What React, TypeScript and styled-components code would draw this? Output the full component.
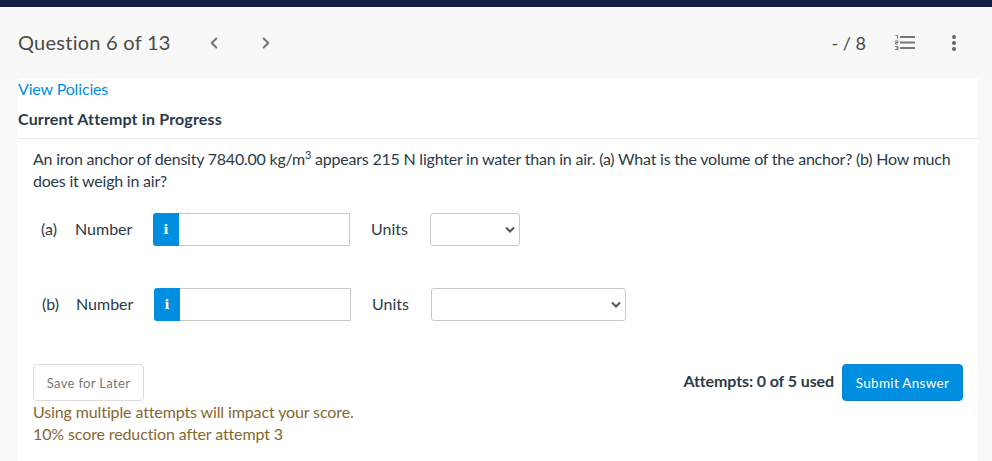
import React from 'react';
import styled, { createGlobalStyle } from 'styled-components';
import { ChevronLeft, ChevronRight } from 'lucide-react';

const GlobalStyle = createGlobalStyle`
  html, body {
    margin: 0;
    padding: 0;
    background: #f9f9f9;
    font-family: Lato, "Liberation Sans", sans-serif;
    color: #2b3a49;
    overflow: hidden;
  }
`;

const selectArrow =
  "data:image/svg+xml,%3Csvg xmlns='http://www.w3.org/2000/svg' width='10' height='7' viewBox='0 0 10 7'%3E%3Cpath d='M1 1.5l4 4 4-4' fill='none' stroke='%23555' stroke-width='2'/%3E%3C/svg%3E";

function ListIcon() {
  return (
    <svg width="20" height="15" viewBox="0 0 20 15">
      <path d="M0.5 0.5h2v3.5" fill="none" stroke="#777" strokeWidth="1" />
      <path d="M0 6h3v1.5H0.5V9H3" fill="none" stroke="#777" strokeWidth="1" />
      <path d="M0 11.5h3v3H0M1 13h2" fill="none" stroke="#777" strokeWidth="1" />
      <path d="M5 2h15M5 7.5h15M5 13h15" fill="none" stroke="#777" strokeWidth="2" />
    </svg>
  );
}

function MoreIcon() {
  return (
    <svg width="4" height="16" viewBox="0 0 4 16">
      <circle cx="2" cy="2" r="2" fill="#666" />
      <circle cx="2" cy="8" r="2" fill="#666" />
      <circle cx="2" cy="14" r="2" fill="#666" />
    </svg>
  );
}

function AnswerRow({ part, unitsWidth, shift }: { part: string; unitsWidth: number; shift: number }) {
  return (
    <Row $shift={shift}>
      <PartLabel>{part}</PartLabel>
      <NumberLabel>Number</NumberLabel>
      <InfoButton>i</InfoButton>
      <NumberInput type="text" />
      <UnitsLabel>Units</UnitsLabel>
      <UnitsSelect $width={unitsWidth}>
        <option></option>
      </UnitsSelect>
    </Row>
  );
}

export default function App() {
  return (
    <Page>
      <GlobalStyle />
      <TopBar />
      <Header>
        <QuestionTitle>Question 6 of 13</QuestionTitle>
        <NavButton><ChevronLeft size={18} strokeWidth={2.8} /></NavButton>
        <NavButton><ChevronRight size={18} strokeWidth={2.8} /></NavButton>
        <Spacer />
        <Score>- / 8</Score>
        <ToolIcon $width={48}><ListIcon /></ToolIcon>
        <ToolIcon $width={50}><MoreIcon /></ToolIcon>
        <HeaderEnd />
      </Header>
      <Card>
        <PolicyLink>View Policies</PolicyLink>
        <AttemptTitle>Current Attempt in Progress</AttemptTitle>
        <Question>
          An iron anchor of density 7840.00 kg/m<sup>3</sup> appears 215 N lighter in water than in air. (a) What is the volume of the anchor? (b) How much does it weigh in air?
        </Question>
        <AnswerRow part="(a)" unitsWidth={90} shift={0} />
        <AnswerRow part="(b)" unitsWidth={195} shift={1} />
        <Footer>
          <div>
            <SaveButton>Save for Later</SaveButton>
            <Notice>Using multiple attempts will impact your score.</Notice>
            <Notice>10% score reduction after attempt 3</Notice>
          </div>
          <FooterRight>
            <AttemptCount>Attempts: 0 of 5 used</AttemptCount>
            <SubmitButton>Submit Answer</SubmitButton>
          </FooterRight>
        </Footer>
      </Card>
    </Page>
  );
}

const Page = styled.div`
  width: 992px;
  height: 461px;
  overflow: hidden;
`;

const TopBar = styled.div`
  height: 7px;
  background: #14204a;
`;

const Header = styled.div`
  height: 71px;
  display: flex;
  align-items: center;
  padding-left: 18px;
  background: #f8f8f8;
`;

const QuestionTitle = styled.div`
  font-size: 20px;
  line-height: 24px;
  margin-top: -2px;
  letter-spacing: 0.25px;
  color: #4a4a4a;
  width: 182px;
`;

const NavButton = styled.div`
  width: 52px;
  margin-left: 5px;
  margin-right: -5px;
  display: flex;
  justify-content: flex-start;
  color: #777;
`;

const Spacer = styled.div`
  flex: 1;
`;

const Score = styled.div`
  font-size: 18px;
  color: #4a4a4a;
  margin-right: 15px;
`;

const ToolIcon = styled.div<{ $width: number }>`
  width: ${(p) => p.$width}px;
  display: flex;
  justify-content: center;
  align-items: center;
`;

const HeaderEnd = styled.div`
  width: 13px;
`;

const Card = styled.div`
  margin: 0 14px 0 18px;
  height: 383px;
  background: #fff;
`;

const PolicyLink = styled.a`
  display: block;
  padding-top: 1px;
  font-size: 16px;
  line-height: 20px;
  letter-spacing: -0.15px;
  color: #008ee0;
`;

const AttemptTitle = styled.div`
  margin-top: 10px;
  padding-bottom: 9px;
  height: 20px;
  font-size: 16px;
  line-height: 20px;
  font-weight: 700;
  letter-spacing: 0.16px;
  border-bottom: 1px solid #e8e8e8;
`;

const Question = styled.div`
  margin: 9px 14px 0 15px;
  font-size: 16px;
  line-height: 22px;
  letter-spacing: -0.22px;
  height: 44px;
  sup {
    font-size: 11px;
    line-height: 0;
  }
`;

const Row = styled.div<{ $shift: number }>`
  display: flex;
  align-items: center;
  height: 33px;
  margin-top: ${(p) => (p.$shift ? 42 : 21)}px;
  padding-left: ${(p) => 23 + p.$shift}px;
  font-size: 16px;
`;

const PartLabel = styled.span`
  width: 34px;
  margin-top: -2px;
`;

const NumberLabel = styled.span`
  width: 78px;
  margin-top: -2px;
`;

const InfoButton = styled.div`
  width: 26px;
  height: 33px;
  box-sizing: border-box;
  display: flex;
  align-items: center;
  justify-content: center;
  background: #008ee0;
  border-radius: 3px 0 0 3px;
  color: #fff;
  font-family: "DejaVu Serif", serif;
  font-size: 13px;
  font-weight: 700;
`;

const NumberInput = styled.input`
  width: 171px;
  height: 33px;
  box-sizing: border-box;
  border: 1px solid #c8c8c8;
  border-left: none;
  border-radius: 0;
  padding: 0;
  outline: none;
`;

const UnitsLabel = styled.span`
  margin-left: 21px;
  margin-top: -2px;
  width: 59px;
`;

const UnitsSelect = styled.select<{ $width: number }>`
  width: ${(p) => p.$width}px;
  height: 33px;
  box-sizing: border-box;
  border: 1px solid #c8c8c8;
  border-radius: 3px;
  appearance: none;
  background: #fff url("${selectArrow}") no-repeat right 4px center;
`;

const Footer = styled.div`
  display: flex;
  justify-content: space-between;
  align-items: flex-start;
  margin: 43px 15px 0 15px;
`;

const SaveButton = styled.button`
  display: block;
  width: 111px;
  height: 37px;
  box-sizing: border-box;
  border: 1px solid #dcdcdc;
  border-radius: 4px;
  background: #fff;
  color: #777;
  font-family: Lato, "Liberation Sans", sans-serif;
  font-size: 13px;
  letter-spacing: 0.35px;
  padding: 0;
`;

const Notice = styled.div`
  font-size: 16px;
  line-height: 22px;
  letter-spacing: -0.12px;
  color: #86672f;
`;

const FooterRight = styled.div`
  display: flex;
  align-items: flex-start;
  gap: 8px;
`;

const AttemptCount = styled.div`
  font-size: 16px;
  font-weight: 700;
  line-height: 33px;
  letter-spacing: -0.1px;
`;

const SubmitButton = styled.button`
  width: 121px;
  height: 37px;
  box-sizing: border-box;
  border: 1px solid #0a82cc;
  border-radius: 4px;
  background: #008ee0;
  color: #fff;
  font-family: Lato, "Liberation Sans", sans-serif;
  font-size: 13.5px;
  letter-spacing: 0.3px;
  padding: 0;
`;
